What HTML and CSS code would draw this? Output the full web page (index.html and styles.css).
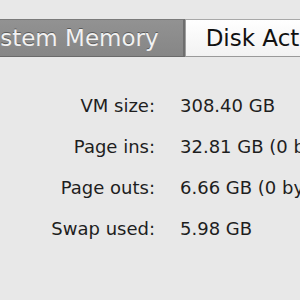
FILE: index.html
```html
<!DOCTYPE html>
<html lang="en">
<head>
  <meta charset="UTF-8">
  <title>Activity Monitor</title>
  <link rel="stylesheet" href="styles.css">
</head>
<body>
  <div class="tabs">
    <div class="tab selected">System Memory</div>
    <div class="tab">Disk Activity</div>
    <div class="tab">Disk Usage</div>
  </div>
  <div class="stats">
    <span class="label">VM size:</span><span class="value">308.40 GB</span>
    <span class="label">Page ins:</span><span class="value">32.81 GB (0 bytes/sec)</span>
    <span class="label">Page outs:</span><span class="value">6.66 GB (0 bytes/sec)</span>
    <span class="label">Swap used:</span><span class="value">5.98 GB</span>
  </div>
</body>
</html>
```
FILE: styles.css
```css
body { margin: 0; background: #e8e8e8; font-family: "DejaVu Sans", sans-serif; overflow: hidden; width: 300px; height: 300px; }
.tabs { display: flex; margin: 19px 0 0 -28px; white-space: nowrap; }
.tab { font-size: 23px; line-height: 36px; padding: 0 20px; color: #111; background: linear-gradient(#ffffff, #f2f2f2); border-top: 1px solid #a8a8a8; border-bottom: 1px solid #9a9a9a; border-left: 1px solid #a0a0a0; }
.tab.selected { color: #f2f2f2; background: linear-gradient(#929292, #868686); border-left: none; border-right: 2px solid #6e6e6e; border-top-color: #7a7a7a; border-bottom-color: #6a6a6a; padding: 0 24px 0 0; text-shadow: 0 -1px 0 #5a5a5a; }
.stats { display: grid; grid-template-columns: 155px auto; column-gap: 25px; margin-top: 28px; font-size: 18px; line-height: 41px; color: #1e1e1e; white-space: nowrap; }
.label { text-align: right; }
```
